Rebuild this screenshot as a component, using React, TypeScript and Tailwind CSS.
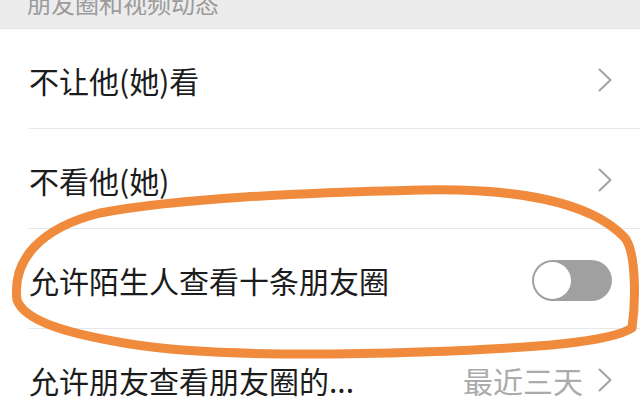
const Chevron = () => (
  <svg width="14" height="24" viewBox="0 0 14 24" fill="none">
    <path d="M1.5 1.5 L12.5 12 L1.5 22.5" stroke="#a3a3a3" strokeWidth="2" strokeLinecap="round" strokeLinejoin="round" />
  </svg>
);

const Row = ({ children }: { children: React.ReactNode }) => (
  <div className="pl-[29px] h-[100px]">
    <div className="h-full flex items-center justify-between pr-[28px] pt-[3px] border-b border-[#e8e8e8]">
      {children}
    </div>
  </div>
);

export default function App() {
  return (
    <div className="relative w-[640px] h-[400px] overflow-hidden bg-white font-['Noto_Sans_CJK_SC',sans-serif]">
      {/* section header, cut off at the top */}
      <div className="h-[29px] bg-[#ececec] border-b border-[#e2e2e2] pl-[27px] overflow-hidden">
        <div className="-mt-[9px] text-[24px] leading-[24px] text-[#9b9b9b]">朋友圈和视频动态</div>
      </div>

      <Row>
        <span className="text-[30px] text-[#1c1c1c]">不让他(她)看</span>
        <Chevron />
      </Row>
      <Row>
        <span className="text-[30px] text-[#1c1c1c]">不看他(她)</span>
        <Chevron />
      </Row>
      <Row>
        <span className="text-[30px] text-[#1c1c1c]">允许陌生人查看十条朋友圈</span>
        <div className="w-[80px] h-[41px] rounded-full bg-[#a0a0a0] p-[2px] flex items-center">
          <div className="w-[37px] h-[37px] rounded-full bg-white" />
        </div>
      </Row>
      <Row>
        <span className="text-[30px] text-[#1c1c1c]">允许朋友查看朋友圈的...</span>
        <div className="flex items-center gap-[15px]">
          <span className="text-[30px] text-[#ababab]">最近三天</span>
          <Chevron />
        </div>
      </Row>

      {/* hand-drawn orange circle over the list */}
      <svg className="absolute inset-0 pointer-events-none" width="640" height="400" viewBox="0 0 640 400" fill="none">
        <path
          d="M17 300 C12 260, 40 228, 100 213 C180 198, 300 193, 420 190 C510 188, 590 200, 625 238 C636 252, 636 300, 632 328 C610 342, 540 348, 420 352 C300 356, 200 355, 130 344 C70 334, 25 322, 17 300 Z"
          stroke="#f08a3c"
          strokeWidth="9"
          strokeLinejoin="round"
        />
      </svg>
    </div>
  );
}
